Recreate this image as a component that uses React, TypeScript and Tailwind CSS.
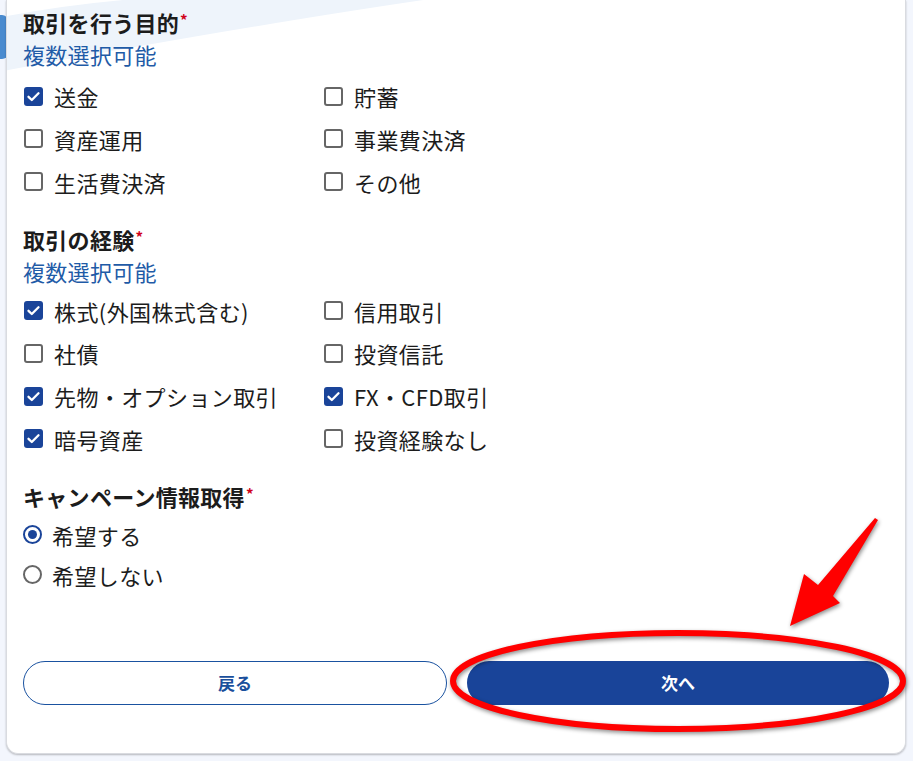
import React from "react";

const FONT = { fontFamily: '"Noto Sans CJK JP", "Noto Sans", sans-serif' };

function Check({ checked, label }: { checked: boolean; label: string }) {
  return (
    <div className="flex items-center h-[32px]">
      <span
        className={
          checked
            ? "ml-[1px] w-[19px] h-[19px] rounded-[3px] bg-[#1a4499] flex items-center justify-center shrink-0"
            : "ml-[1px] w-[19px] h-[19px] rounded-[3px] border-2 border-[#666666] bg-white shrink-0"
        }
      >
        {checked && (
          <svg width="19" height="19" viewBox="0 0 19 19">
            <polyline points="4.5,9.8 7.8,13 14.5,6.2" fill="none" stroke="white" strokeWidth="2.3" strokeLinecap="round" strokeLinejoin="round" />
          </svg>
        )}
      </span>
      <span className="ml-[11px] text-[22px] leading-[32px] tracking-[0.4px] text-[#1c1c1c]">{label}</span>
    </div>
  );
}

function Radio({ checked, label }: { checked: boolean; label: string }) {
  return (
    <div className="flex items-center h-[32px]">
      <span
        className={
          checked
            ? "w-[19px] h-[19px] rounded-full border-2 border-[#1a4499] flex items-center justify-center shrink-0"
            : "w-[19px] h-[19px] rounded-full border-2 border-[#666666] shrink-0"
        }
      >
        {checked && <span className="w-[9px] h-[9px] rounded-full bg-[#1a4499]" />}
      </span>
      <span className="ml-[10px] text-[22px] leading-[32px] tracking-[0.4px] text-[#1c1c1c]">{label}</span>
    </div>
  );
}

function Heading({ children }: { children: React.ReactNode }) {
  return (
    <div className="flex items-start h-[32px]">
      <span className="text-[22px] leading-[32px] tracking-[0.3px] font-bold text-[#1c1c1c]">{children}</span>
      <span className="ml-[1px] text-[15px] leading-[15px] mt-[6px] font-bold text-[#d0021b]">*</span>
    </div>
  );
}

function Sub() {
  return <div className="text-[22px] leading-[32px] tracking-[0.3px] text-[#1f5ba7] h-[32px]">複数選択可能</div>;
}

export default function App() {
  return (
    <div className="relative w-[913px] h-[761px] overflow-hidden bg-[#f3f6fd]" style={FONT}>
      <div className="absolute left-0 top-[15px] w-[8px] h-[44px] bg-[#4a8bcf] rounded-r-[6px]" />
      <div className="relative ml-[6px] w-[900px] h-[754px] bg-white border border-t-0 border-[#d9dbe0] rounded-b-[12px] shadow-[0_1px_2px_rgba(0,0,0,0.25)] overflow-hidden">
        <svg className="absolute left-0 top-0" width="900" height="90" viewBox="0 0 900 90">
          <path d="M -10 18 Q 60 4 140 -2 L 430 -2 Q 250 24 -10 72 Z" fill="#eef4fb" />
        </svg>
        <div className="relative px-[16px] pt-[6px] pb-[46px]">
          <Heading>取引を行う目的</Heading>
          <Sub />
          <div className="grid grid-cols-[300px_1fr] gap-y-[10.75px] mt-[10px]">
            <Check checked label="送金" />
            <Check checked={false} label="貯蓄" />
            <Check checked={false} label="資産運用" />
            <Check checked={false} label="事業費決済" />
            <Check checked={false} label="生活費決済" />
            <Check checked={false} label="その他" />
          </div>
          <div className="mt-[25px]">
            <Heading>取引の経験</Heading>
          </div>
          <Sub />
          <div className="grid grid-cols-[300px_1fr] gap-y-[10.75px] mt-[8px]">
            <Check checked label="株式(外国株式含む)" />
            <Check checked={false} label="信用取引" />
            <Check checked={false} label="社債" />
            <Check checked={false} label="投資信託" />
            <Check checked label="先物・オプション取引" />
            <Check checked label="FX・CFD取引" />
            <Check checked label="暗号資産" />
            <Check checked={false} label="投資経験なし" />
          </div>
          <div className="mt-[25px]">
            <Heading>キャンペーン情報取得</Heading>
          </div>
          <div className="flex flex-col gap-y-[8px] mt-[7px]">
            <Radio checked label="希望する" />
            <Radio checked={false} label="希望しない" />
          </div>
          <div className="flex gap-[20px] mt-[70px]">
            <button className="flex-1 h-[44px] rounded-full border border-[#1a52a0] bg-white text-[#1a4f9c] text-[17px] font-bold">
              戻る
            </button>
            <button className="flex-1 h-[44px] rounded-full bg-[#194499] text-white text-[17px] font-bold">
              次へ
            </button>
          </div>
        </div>
      </div>
      <svg
        className="absolute left-0 top-0 pointer-events-none"
        width="913"
        height="761"
        viewBox="0 0 913 761"
        style={{ filter: "drop-shadow(1px 2px 2px rgba(0,0,0,0.45))" }}
      >
        <ellipse cx="678" cy="681" rx="225" ry="48" fill="none" stroke="#ff0000" strokeWidth="6" />
        <polygon points="878,520 833,596 840,603 790,626 804,574 818,585 875,518" fill="#ff0000" />
      </svg>
    </div>
  );
}
